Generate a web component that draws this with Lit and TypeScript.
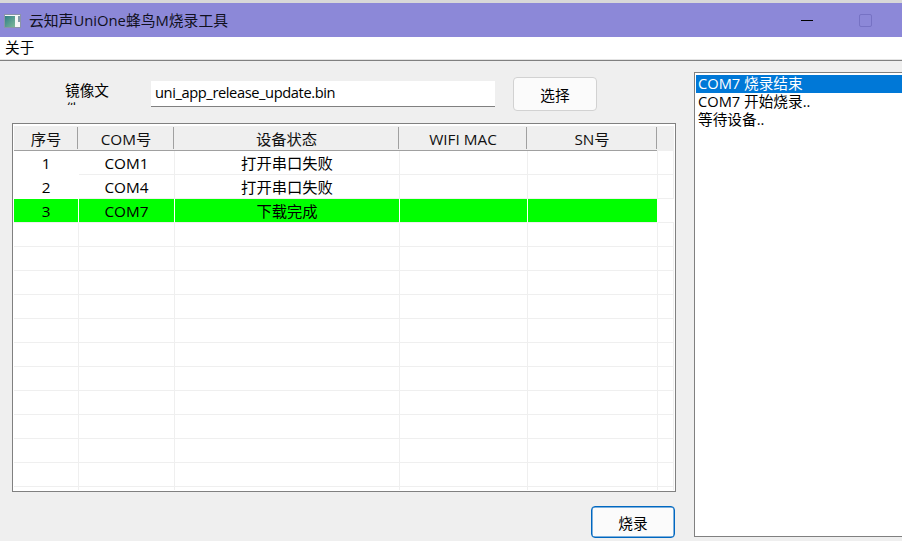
import { LitElement, html, css } from "lit";
import { customElement } from "lit/decorators.js";

const COLS = [65, 96, 225, 128, 130, 16];
const HEAD = ["序号", "COM号", "设备状态", "WIFI MAC", "SN号"];
const HEAD_W = [64, 96, 225, 128, 130];
const DATA = [
  ["1", "COM1", "打开串口失败", "", ""],
  ["2", "COM4", "打开串口失败", "", ""],
  ["3", "COM7", "下载完成", "", ""],
];

@customElement("app-root")
export class AppRoot extends LitElement {
  static styles = css`
    :host {
      display: block;
      width: 902px;
      height: 541px;
      overflow: hidden;
      background: #efefef;
      color: #000;
      font-family: "Open Sans", "Noto Sans CJK SC", sans-serif;
      font-size: 14.67px;
    }
    .top { height: 3px; background: #d8d8d8; }
    .title {
      height: 34px;
      background: #8c88d8;
      display: flex;
      align-items: center;
      padding-left: 4px;
      color: #101020;
      font-size: 14.8px;
    }
    .title svg.app { margin: 1px 8px 0 0; flex: none; }
    .title .name { flex: 1; position: relative; top: -1px; }
    .min { width: 12px; height: 1px; background: #000; margin-right: 46px; }
    .max {
      width: 11px; height: 11px;
      border: 1px solid #7672c4;
      border-radius: 2px;
      margin-right: 30px;
    }
    .menu {
      height: 22px;
      background: #fff;
      padding-left: 5px;
      line-height: 21px;
      border-bottom: 1px solid #e4e4e4;
    }
    .rule { height: 1px; background: #808080; }
    .main { display: flex; align-items: flex-start; padding-left: 12px; }
    .left { width: 664px; padding-top: 16px; flex: none; }
    .form { display: flex; align-items: flex-start; height: 34px; padding-left: 53px; }
    .label {
      width: 48px;
      height: 24px;
      margin-top: 4px;
      line-height: 19px;
      overflow: hidden;
      margin-right: 38px;
      flex: none;
    }
    .input {
      width: 344px;
      height: 26px;
      margin-top: 4px;
      box-sizing: border-box;
      background: #fff;
      border-bottom: 1px solid #808080;
      padding-left: 4px;
      line-height: 23px;
      margin-right: 18px;
      white-space: nowrap;
      letter-spacing: -0.4px;
    }
    button {
      font: inherit;
      color: #000;
      background: #fbfbfb;
      box-sizing: border-box;
      border: 1px solid #d2d2d2;
      border-radius: 4px;
      padding: 0;
    }
    .pick { width: 84px; height: 34px; }
    .table {
      box-sizing: border-box;
      height: 369px;
      margin-top: 12px;
      border: 1px solid #808080;
      padding: 2px 1px 1px;
      background: #fff;
      overflow: hidden;
      font-size: 15.3px;
    }
    .scroll { height: 364px; overflow: hidden; }
    .head { display: flex; height: 25px; background: #efefef; }
    .h {
      box-sizing: border-box;
      height: 25px;
      border-bottom: 1px solid #a0a0a0;
      text-align: center;
      line-height: 26px;
      position: relative;
      color: #111;
    }
    .h::after {
      content: "";
      position: absolute;
      right: 0;
      top: 1px;
      bottom: 1px;
      width: 1px;
      background: #a0a0a0;
    }
    .row { display: flex; height: 24px; }
    .c {
      box-sizing: border-box;
      height: 24px;
      border-right: 1px solid #efefef;
      border-bottom: 1px solid #efefef;
      text-align: center;
      line-height: 25px;
      white-space: nowrap;
      overflow: hidden;
    }
    .row.plain .c.first { border-color: #fff; }
    .row.ok .c { background: #00ff00; border-right-color: #fff; border-bottom-color: #efefef; }
    .row.ok .c.last { background: #fff; border-right: 0; }
    .foot { display: flex; justify-content: flex-end; padding: 14px 1px 0 0; }
    .go {
      width: 84px;
      height: 32px;
      border: 1px solid #0067c0;
      border-radius: 4px;
      box-shadow: inset 0 0 0 0.5px #0067c0;
    }
    .list {
      box-sizing: border-box;
      width: 220px;
      height: 465px;
      margin: 11px 0 0 18px;
      flex: none;
      background: #fff;
      border: 1px solid #808080;
      padding: 2px 0 0 1px;
    }
    .item { height: 18px; line-height: 17px; padding-left: 2px; white-space: nowrap; }
    .item.sel { background: #0078d7; color: #fff; }
  `;

  render() {
    const rows = Array.from({ length: 15 }, (_, i) => DATA[i] ?? ["", "", "", "", ""]);
    return html`
      <div class="top"></div>
      <div class="title">
        <svg class="app" width="17" height="14" viewBox="0 0 17 14">
          <defs>
            <linearGradient id="g" x1="0" y1="0" x2="1" y2="1">
              <stop offset="0" stop-color="#2f7f86" />
              <stop offset="1" stop-color="#7fb89a" />
            </linearGradient>
          </defs>
          <rect x="0.5" y="0.5" width="16" height="13" fill="#f6f6f6" stroke="#8a94a8" />
          <rect x="1" y="2" width="10" height="11" fill="url(#g)" />
          <rect x="14" y="2" width="2" height="6" fill="#7f9aa6" />
        </svg>
        <span class="name">云知声UniOne蜂鸟M烧录工具</span>
        <span class="min"></span>
        <span class="max"></span>
      </div>
      <div class="menu">关于</div>
      <div class="rule"></div>
      <div class="main">
        <div class="left">
          <div class="form">
            <div class="label">镜像文件</div>
            <div class="input">uni_app_release_update.bin</div>
            <button class="pick">选择</button>
          </div>
          <div class="table">
            <div class="scroll">
              <div class="head">
                ${HEAD.map((t, i) => html`<div class="h" style="width:${HEAD_W[i]}px">${t}</div>`)}
              </div>
              ${rows.map(
                (r, i) => html`
                  <div class="row ${i === 2 ? "ok" : i < 2 ? "plain" : ""}">
                    ${r.map(
                      (t, j) => html`<div class="c ${j === 0 ? "first" : ""}" style="width:${COLS[j]}px">${t}</div>`
                    )}
                    <div class="c last" style="width:${COLS[5]}px"></div>
                  </div>
                `
              )}
            </div>
          </div>
          <div class="foot"><button class="go">烧录</button></div>
        </div>
        <div class="list">
          <div class="item sel">COM7 烧录结束</div>
          <div class="item">COM7 开始烧录..</div>
          <div class="item">等待设备..</div>
        </div>
      </div>
    `;
  }
}
